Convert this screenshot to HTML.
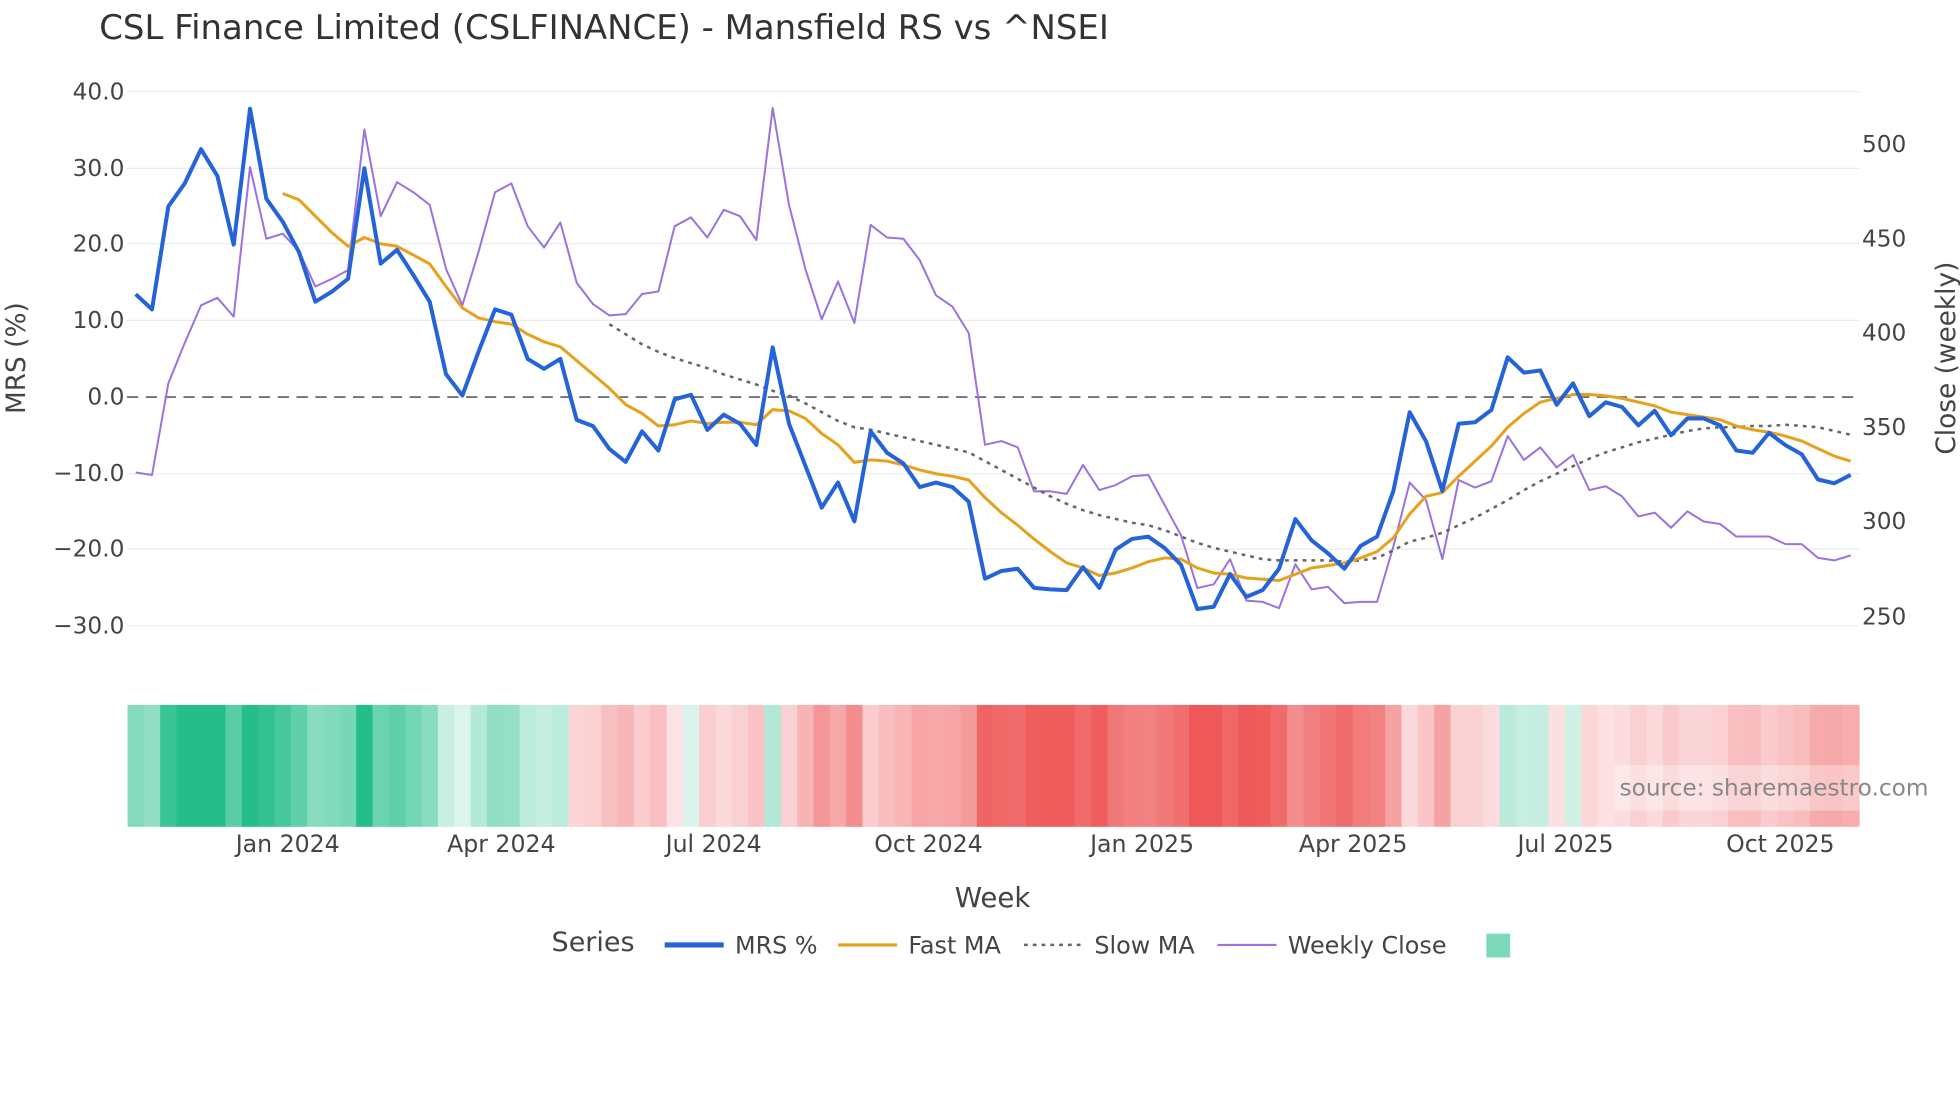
<!DOCTYPE html>
<html><head><meta charset="utf-8"><style>html,body{margin:0;padding:0;background:#fff;width:1960px;height:1102px;overflow:hidden}svg{display:block}</style></head>
<body>
<svg id="s" width="1960" height="1102" viewBox="0 0 1560 877" preserveAspectRatio="none" xmlns="http://www.w3.org/2000/svg" font-family="'DejaVu Sans','Liberation Sans',sans-serif">
<text x="79" y="31" font-size="27" fill="#333">CSL Finance Limited (CSLFINANCE) - Mansfield RS vs ^NSEI</text>
<g stroke="#e8ecf2" stroke-width="1">
<line x1="101" x2="1480" y1="73" y2="73"/><line x1="101" x2="1480" y1="134" y2="134"/><line x1="101" x2="1480" y1="194" y2="194"/><line x1="101" x2="1480" y1="255" y2="255"/><line x1="101" x2="1480" y1="377" y2="377"/><line x1="101" x2="1480" y1="437" y2="437"/><line x1="101" x2="1480" y1="498" y2="498"/>
</g>
<line x1="101" x2="1480" y1="316" y2="316" stroke="#6b7280" stroke-width="1.5" stroke-dasharray="9,6"/>
<g font-size="18.5" fill="#444" text-anchor="end">
<text x="99" y="79">40.0</text><text x="99" y="140">30.0</text><text x="99" y="200">20.0</text><text x="99" y="261">10.0</text><text x="99" y="322">0.0</text><text x="99" y="383">−10.0</text><text x="99" y="443">−20.0</text><text x="99" y="504">−30.0</text>
</g>
<g font-size="18.5" fill="#444">
<text x="1482" y="121">500</text><text x="1482" y="196">450</text><text x="1482" y="271">400</text><text x="1482" y="346">350</text><text x="1482" y="421">300</text><text x="1482" y="497">250</text>
</g>
<text transform="translate(20,285) rotate(-90)" font-size="21" fill="#444" text-anchor="middle">MRS (%)</text>
<text transform="translate(1556,285) rotate(-90)" font-size="21" fill="#444" text-anchor="middle">Close (weekly)</text>
<g id="heat"></g>
<g id="lines"></g>
<rect x="1285" y="609" width="195" height="36" fill="#fff" opacity="0.35"/>
<text x="1289" y="633" font-size="18.5" fill="#888">source: sharemaestro.com</text>
<g font-size="18.8" fill="#444" text-anchor="middle">
<text x="229" y="678">Jan 2024</text><text x="399" y="678">Apr 2024</text><text x="568" y="678">Jul 2024</text><text x="739" y="678">Oct 2024</text><text x="909" y="678">Jan 2025</text><text x="1077" y="678">Apr 2025</text><text x="1246" y="678">Jul 2025</text><text x="1417" y="678">Oct 2025</text>
</g>
<text x="790" y="722" font-size="22" fill="#444" text-anchor="middle">Week</text>
<text x="439" y="757" font-size="21.5" fill="#444">Series</text>
<line x1="529" x2="576" y1="752" y2="752" stroke="#2563d9" stroke-width="4"/>
<text x="585" y="759" font-size="19" fill="#444">MRS %</text>
<line x1="667" x2="714" y1="752" y2="752" stroke="#e6a11d" stroke-width="2.5"/>
<text x="723" y="759" font-size="19" fill="#444">Fast MA</text>
<line x1="815" x2="862" y1="752" y2="752" stroke="#666" stroke-width="2" stroke-dasharray="3,4"/>
<text x="871" y="759" font-size="19" fill="#444">Slow MA</text>
<line x1="969" x2="1016" y1="752" y2="752" stroke="#9b72e0" stroke-width="1.7"/>
<text x="1025" y="759" font-size="19" fill="#444">Weekly Close</text>
<rect x="1183" y="743" width="19" height="19" fill="#7dd9bb"/>
</svg>
<script>
var m=[13.5,11.5,25,28,32.5,29,20,37.8,26,23,19,12.5,13.8,15.5,30,17.5,19.3,16,12.5,3,0.2,6,11.5,10.8,5,3.7,5,-3,-3.8,-6.8,-8.5,-4.5,-7,-0.3,0.3,-4.3,-2.3,-3.5,-6.3,6.5,-3.5,-9,-14.5,-11.2,-16.3,-4.5,-7.3,-8.7,-11.8,-11.2,-11.8,-13.7,-23.8,-22.8,-22.5,-25,-25.2,-25.3,-22.3,-25,-20,-18.6,-18.3,-19.8,-22,-27.8,-27.5,-23.2,-26.2,-25.3,-22.5,-16,-18.8,-20.5,-22.5,-19.5,-18.3,-12.3,-2,-5.8,-12.3,-3.5,-3.3,-1.7,5.2,3.2,3.5,-1,1.8,-2.5,-0.7,-1.3,-3.7,-1.8,-5,-2.8,-2.8,-3.7,-7,-7.3,-4.7,-6.3,-7.5,-10.8,-11.3,-10.2];
var p=[376,378,305,273,243,237,252,133,190,186,200,228,222,215,103,172,145,153,163,214,243,200,153,146,180,197,177,225,242,251,250,234,232,180,173,189,167,172,191,86,163,214,254,224,257,179,189,190,207,235,244,265,354,351,356,391,391,393,370,390,386,379,378,402,426,468,465,445,478,479,484,449,469,467,480,479,479,435,384,398,445,382,388,383,347,366,356,372,362,390,387,395,411,408,420,407,415,417,427,427,427,433,433,444,446,442];
var f=[154,159,172,185,196,189,194,196,203,210,228,245,253,256,258,266,272,276,287,298,309,322,329,339,338,335,337,336,336,338,326,327,333,345,354,368,366,367,370,374,377,379,382,396,408,418,429,439,448,452,458,456,452,447,444,445,452,456,457,460,461,462,457,452,450,448,444,439,428,409,395,392,379,367,355,340,329,320,317,314,314,315,317,320,323,328,330,332,334,339,342,344,347,351,357,363,367];
var sl=[258,266,274,280,285,289,293,298,302,306,311,315,321,328,335,340,342,345,348,351,354,357,360,367,374,381,388,395,401,406,410,413,416,418,422,427,432,436,439,442,445,446,446,446,446,447,446,444,438,431,428,424,418,412,405,398,390,383,377,371,365,360,356,352,349,346,343,341,340,340,339,339,338,339,340,343,346];
function X(i){return 108+i*13.0}
function path(arr,off,fn){return arr.map(function(v,k){return (k?'L':'M')+X(k+off).toFixed(1)+','+fn(v).toFixed(1)}).join('')}
var ns='http://www.w3.org/2000/svg';
var h=document.getElementById('heat'),L=document.getElementById('lines');
function mix(a,b,t){t=Math.max(0,Math.min(1,t));return 'rgb('+[0,1,2].map(function(j){return Math.round(a[j]+(b[j]-a[j])*t)}).join(',')+')'}
m.forEach(function(v,i){var r=document.createElementNS(ns,'rect');var x0=Math.max(101,X(i)-6.5),x1=Math.min(1480,X(i)+6.5);
r.setAttribute('x',x0);r.setAttribute('width',x1-x0+0.6);r.setAttribute('y',561);r.setAttribute('height',97);
var c=v>=0?mix([220,245,236],[37,190,138],v/28):mix([252,228,230],[238,88,88],(-v)/26);
r.setAttribute('fill',c);h.appendChild(r)});
function addPath(d,st,w,da){var e=document.createElementNS(ns,'path');e.setAttribute('d',d);e.setAttribute('fill','none');e.setAttribute('stroke',st);e.setAttribute('stroke-width',w);e.setAttribute('stroke-linejoin','round');if(da)e.setAttribute('stroke-dasharray',da);L.appendChild(e)}
addPath(path(p,0,function(v){return v}),'#9b72e0',1.6);
addPath(path(sl,29,function(v){return v}),'#666',2,'3,4');
addPath(path(f,9,function(v){return v}),'#e6a11d',2.4);
addPath(path(m,0,function(v){return 316-6.07*v}),'#2563d9',3.2);
</script>
</body></html>
